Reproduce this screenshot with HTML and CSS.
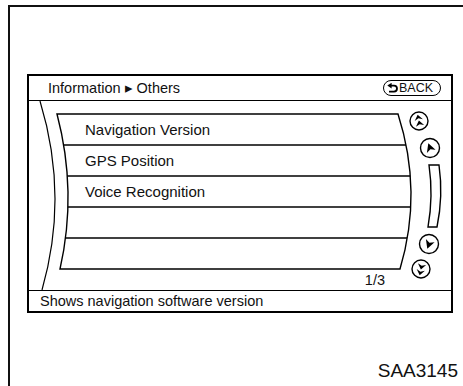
FILE: index.html
```html
<!DOCTYPE html>
<html lang="en">
<head>
  <meta charset="UTF-8">
  <title>Information - Others</title>
  <link rel="stylesheet" href="styles.css">
</head>
<body>

<div class="sheet">
  <div class="screen">
    <div class="screen-head">
      <span class="crumb">Information &#9656; Others</span>
      <span class="back-btn">
        <svg class="back-icon" width="11" height="10" viewBox="0 0 11 10">
          <path d="M4 2.6 H7 A3 3 0 0 1 7 8.6 H2" fill="none" stroke="#000" stroke-width="1.8"/>
          <path d="M0.3 2.6 L4.6 -0.2 L4.6 5.4 Z" fill="#000"/>
        </svg>BACK
      </span>
    </div>

    <div class="screen-body">
      <!-- curved screen outline, row rules and scroll controls -->
      <svg class="screen-art" width="422" height="189" viewBox="0 0 422 189">
        <defs>
          <clipPath id="list-shape">
            <path d="M28 13 L369 13 Q394 91 371 168 L31 168 Q48.5 91 28 13 Z"/>
          </clipPath>
        </defs>
        <path d="M11 0 Q40 95 13 189" fill="none" stroke="#000" stroke-width="1.2"/>
        <path d="M28 13 L369 13 Q394 91 371 168 L31 168 Q48.5 91 28 13 Z" fill="none" stroke="#000" stroke-width="1.4"/>
        <g clip-path="url(#list-shape)" stroke="#000" stroke-width="1.3">
          <line x1="0" y1="44" x2="422" y2="44"/>
          <line x1="0" y1="75" x2="422" y2="75"/>
          <line x1="0" y1="106" x2="422" y2="106"/>
          <line x1="0" y1="137" x2="422" y2="137"/>
        </g>

        <g fill="none" stroke="#000" stroke-width="1.4">
          <circle cx="390" cy="20" r="9"/>
          <circle cx="401" cy="47" r="9.5"/>
          <circle cx="400" cy="143" r="9.5"/>
          <circle cx="392" cy="168" r="9"/>
          <path d="M400 64 L410 64 Q414.4 95 408 126 L399 126 Q404.5 95 400 64 Z"/>
        </g>
        <g fill="#000">
          <path transform="translate(390 20) rotate(-12)" d="M0 -6.5 L4.2 -1 L0 -2.8 L-4.2 -1 Z M0 -0.5 L4.2 5 L0 3.2 L-4.2 5 Z"/>
          <path transform="translate(401 47) rotate(-20)" d="M0 -5 L4.6 3.6 L0 1.2 L-4.6 3.6 Z"/>
          <path transform="translate(400 143) rotate(20)" d="M0 5 L4.6 -3.6 L0 -1.2 L-4.6 -3.6 Z"/>
          <path transform="translate(392 168) rotate(12)" d="M0 6.5 L4.2 1 L0 2.8 L-4.2 1 Z M0 0.5 L4.2 -5 L0 -3.2 L-4.2 -5 Z"/>
        </g>
      </svg>

      <ul class="menu">
        <li>Navigation Version</li>
        <li>GPS Position</li>
        <li>Voice Recognition</li>
        <li></li>
        <li></li>
      </ul>
      <div class="page-count">1/3</div>
    </div>

    <div class="screen-status">Shows navigation software version</div>
  </div>

  <div class="fig-code">SAA3145</div>
</div>

</body>
</html>
```

FILE: styles.css
```css
html, body {
  margin: 0;
  padding: 0;
}
body {
  overflow: hidden;
  background-color: #fff;
  color: #111;
  font-family: "Liberation Sans", Arial, sans-serif;
}
.sheet {
  margin: 5px 0 0 8px;
  width: 453px;
  height: 379px;
  border-top: 2px solid #111;
  border-left: 2px solid #111;
}
.screen {
  margin: 67px 0 0 17px;
  width: 422px;
  border: 2px solid #000;
}
.screen-head {
  height: 24px;
  display: flex;
  align-items: center;
  justify-content: space-between;
  padding: 0 10px 0 19px;
  border-bottom: 1px solid #000;
  font-size: 14.5px;
}
.back-btn {
  display: flex;
  align-items: center;
  gap: 1px;
  box-sizing: border-box;
  width: 58px;
  height: 16px;
  padding-left: 3px;
  border: 1.5px solid #000;
  border-radius: 8px;
  font-size: 12.5px;
}
.screen-body {
  position: relative;
  height: 189px;
}
.screen-art {
  position: absolute;
  top: 0;
  left: 0;
}
.menu {
  list-style: none;
  margin: 0;
  padding: 13px 0 0;
}
.menu li {
  height: 31px;
  display: flex;
  align-items: center;
  padding-left: 56px;
  font-size: 15px;
}
.page-count {
  text-align: right;
  padding: 3px 66px 0 0;
  font-size: 14.5px;
  line-height: 16px;
}
.screen-status {
  height: 20px;
  padding-left: 11px;
  border-top: 1px solid #000;
  font-size: 14.5px;
  line-height: 20px;
}
.fig-code {
  width: 448px;
  margin-top: 47px;
  text-align: right;
  font-size: 19px;
  line-height: 22px;
}
```
